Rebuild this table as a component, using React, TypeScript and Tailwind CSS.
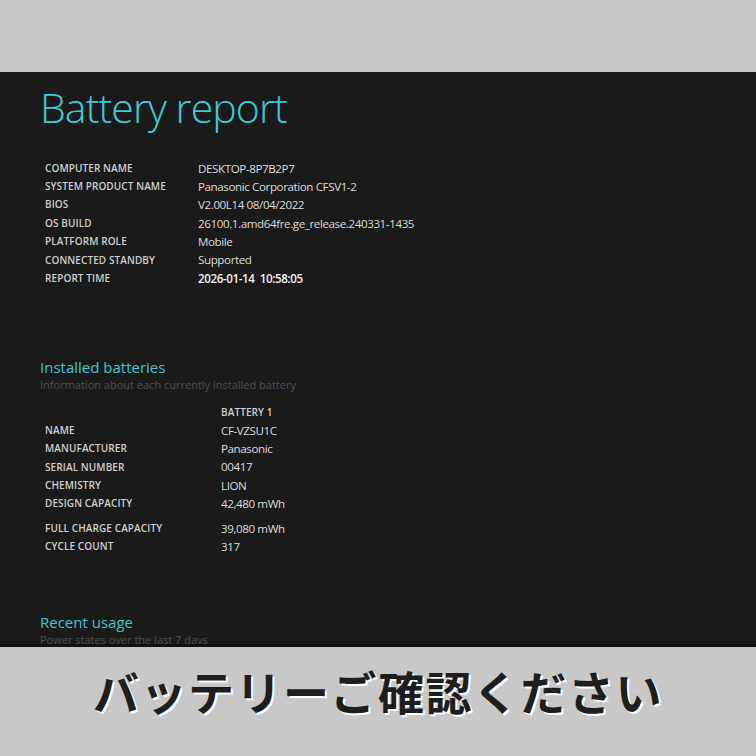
const sysInfo: [string, string][] = [
  ["COMPUTER NAME", "DESKTOP-8P7B2P7"],
  ["SYSTEM PRODUCT NAME", "Panasonic Corporation CFSV1-2"],
  ["BIOS", "V2.00L14 08/04/2022"],
  ["OS BUILD", "26100.1.amd64fre.ge_release.240331-1435"],
  ["PLATFORM ROLE", "Mobile"],
  ["CONNECTED STANDBY", "Supported"],
];

const battery: [string, string][] = [
  ["NAME", "CF-VZSU1C"],
  ["MANUFACTURER", "Panasonic"],
  ["SERIAL NUMBER", "00417"],
  ["CHEMISTRY", "LION"],
  ["DESIGN CAPACITY", "42,480 mWh"],
];

const batteryMore: [string, string][] = [
  ["FULL CHARGE CAPACITY", "39,080 mWh"],
  ["CYCLE COUNT", "317"],
];

function Row({ label, value, labelW, strong }: { label: string; value: string; labelW: string; strong?: boolean }) {
  return (
    <div className="flex h-[18.4px] items-center">
      <div className={`${labelW} pl-[5px] text-[10px] font-semibold tracking-[0.1px] text-[#cfcfcf]`}>{label}</div>
      <div className={`whitespace-pre text-[11.6px] tracking-[-0.4px] ${strong ? "font-semibold text-[#f0f0f0]" : "text-[#dcdcdc]"}`}>{value}</div>
    </div>
  );
}

export default function App() {
  return (
    <div className="flex h-[756px] w-[756px] flex-col overflow-hidden bg-[#c8c8c8] font-['Open_Sans','Noto_Sans',sans-serif]">
      <div className="h-[72px] shrink-0" />

      <div className="h-[575px] shrink-0 overflow-hidden border-b-[3px] border-[#101010] bg-[#1a1a1a] pl-[40px]">
        <h1 className="mt-[10px] h-[50px] text-[41px] font-light leading-[50px] tracking-[-0.9px] text-[#3cccd6]">
          Battery report
        </h1>

        <div className="mt-[27px]">
          {sysInfo.map(([l, v]) => (
            <Row key={l} label={l} value={v} labelW="w-[158px]" />
          ))}
          <Row label="REPORT TIME" value="2026-01-14  10:58:05" labelW="w-[158px]" strong />
        </div>

        <h2 className="mt-[69px] text-[15px] font-medium leading-[20px] text-[#3cc8d0]">Installed batteries</h2>
        <p className="text-[11px] leading-[16px] text-[#4e4e4e]">Information about each currently installed battery</p>

        <div className="mt-[12px]">
          <div className="flex h-[16.4px] items-center">
            <div className="w-[181px]" />
            <div className="text-[10px] font-semibold tracking-[0.1px] text-[#cfcfcf]">BATTERY 1</div>
          </div>
          {battery.map(([l, v]) => (
            <Row key={l} label={l} value={v} labelW="w-[181px]" />
          ))}
          <div className="mt-[6px]">
            {batteryMore.map(([l, v]) => (
              <Row key={l} label={l} value={v} labelW="w-[181px]" />
            ))}
          </div>
        </div>

        <h2 className="mt-[56px] text-[15px] font-medium leading-[20px] text-[#3cc8d0]">Recent usage</h2>
        <p className="text-[11px] leading-[16px] text-[#4e4e4e]">Power states over the last 7 days</p>
      </div>

      <div className="flex flex-1 items-center justify-center pb-[22px]">
        <span className="font-['Noto_Sans_CJK_JP',sans-serif] text-[46px] font-bold tracking-[1.5px] text-[#1e1e1e] [text-shadow:2px_2px_0_#ffffff]">
          バッテリーご確認ください
        </span>
      </div>
    </div>
  );
}
